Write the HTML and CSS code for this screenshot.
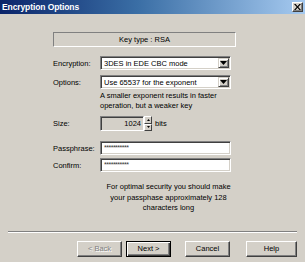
FILE: index.html
```html
<!DOCTYPE html>
<html>
<head>
<meta charset="utf-8">
<link rel="stylesheet" href="styles.css">
</head>
<body>
<div class="window">
  <div class="titlebar">
    <span class="title">Encryption Options</span>
    <span class="close"><svg width="7" height="6" viewBox="0 0 7 6"><path d="M0 0h1.6L3.5 2.2 5.4 0H7L4.3 3 7 6H5.4L3.5 3.8 1.6 6H0l2.7-3z" fill="#000"/></svg></span>
  </div>
  <div class="content">
    <div class="keytype">Key type : RSA</div>
    <div class="form">
      <label class="lbl r-enc">Encryption:</label>
      <div class="combo r-enc"><span class="combo-text">3DES in EDE CBC mode</span><span class="drop"><svg width="7" height="4" viewBox="0 0 7 4"><path d="M0 0h7L3.5 4z" fill="#000"/></svg></span></div>
      <label class="lbl r-opt">Options:</label>
      <div class="combo r-opt"><span class="combo-text">Use 65537 for the exponent</span><span class="drop"><svg width="7" height="4" viewBox="0 0 7 4"><path d="M0 0h7L3.5 4z" fill="#000"/></svg></span></div>
      <div class="desc">A smaller exponent results in faster<br>operation, but a weaker key</div>
      <label class="lbl r-size">Size:</label>
      <div class="sizewrap">
        <div class="spinfield">1024</div>
        <div class="spin">
          <span class="spinbtn"><svg width="3" height="2" viewBox="0 0 3 2"><path d="M0 2h3L1.5 0z" fill="#000"/></svg></span>
          <span class="spinbtn"><svg width="3" height="2" viewBox="0 0 3 2"><path d="M0 0h3L1.5 2z" fill="#000"/></svg></span>
        </div>
        <span class="bits">bits</span>
      </div>
      <label class="lbl r-pass">Passphrase:</label>
      <div class="field r-pass">***********</div>
      <label class="lbl r-conf">Confirm:</label>
      <div class="field r-conf">***********</div>
    </div>
    <div class="note">For optimal security you should make<br>your passphase approximately 128<br>characters long</div>
  </div>
  <div class="sep"></div>
  <div class="buttons">
    <button class="btn disabled">&lt; Back</button>
    <button class="btn default">Next &gt;</button>
    <button class="btn cancel">Cancel</button>
    <button class="btn help">Help</button>
  </div>
</div>
</body>
</html>
```
FILE: styles.css
```css
html, body {
  margin: 0;
  padding: 0;
  background: #d4d0c8;
}
body {
  width: 305px;
  height: 262px;
  overflow: hidden;
  font-family: "Liberation Sans", Arial, sans-serif;
  font-size: 8px;
  color: #000;
}
.window {
  display: flex;
  flex-direction: column;
  width: 305px;
  height: 262px;
}
.titlebar {
  height: 14px;
  display: flex;
  align-items: center;
  justify-content: space-between;
  background: linear-gradient(to right, #0a246a 0%, #3a6ea5 45%, #a6caf0 100%);
  padding: 0 2px 0 2px;
}
.title {
  color: #fff;
  font-weight: bold;
  font-size: 8.5px;
  letter-spacing: -0.1px;
}
.close {
  width: 11px;
  height: 10px;
  box-sizing: border-box;
  background: #d4d0c8;
  border: 1px solid;
  border-color: #fff #404040 #404040 #fff;
  box-shadow: inset -1px -1px #808080;
  display: flex;
  align-items: center;
  justify-content: center;
}
.content {
  padding-left: 53px;
}
.keytype {
  margin-top: 18px;
  width: 183px;
  height: 15px;
  box-sizing: border-box;
  border: 1px solid;
  border-color: #808080 #fff #fff #808080;
  display: flex;
  align-items: center;
  justify-content: center;
  font-size: 7.5px;
}
.form {
  display: grid;
  grid-template-columns: 47px 131px;
  align-items: center;
  margin-top: 9px;
}
.lbl {
  font-size: 7.5px;
}
.combo, .field, .spinfield {
  box-sizing: border-box;
  background: #fff;
  border: 1px solid;
  border-color: #808080 #fff #fff #808080;
  box-shadow: inset 1px 1px #404040, inset -1px -1px #d4d0c8;
}
.combo {
  height: 14px;
  display: flex;
  align-items: center;
  justify-content: space-between;
  padding: 0 1px 0 3px;
  font-size: 7.5px;
}
.r-opt { margin-top: 5px; }
.drop {
  width: 11px;
  height: 10px;
  box-sizing: border-box;
  background: #d4d0c8;
  border: 1px solid;
  border-color: #d4d0c8 #404040 #404040 #d4d0c8;
  box-shadow: inset 1px 1px #fff, inset -1px -1px #808080;
  display: flex;
  align-items: center;
  justify-content: center;
}
.desc {
  grid-column: 2;
  font-size: 7.5px;
  line-height: 10px;
  margin-top: 2px;
}
.sizewrap {
  grid-column: 2;
  display: flex;
  align-items: center;
  margin-top: 5px;
}
.r-size { margin-top: 5px; }
.spinfield {
  width: 44px;
  height: 15px;
  background: #d4d0c8;
  text-align: right;
  padding-right: 2px;
  line-height: 13px;
  font-size: 7.5px;
}
.spin {
  display: flex;
  flex-direction: column;
  width: 8px;
  height: 15px;
}
.spinbtn {
  flex: 1;
  box-sizing: border-box;
  border: 1px solid;
  border-color: #fff #404040 #404040 #fff;
  display: flex;
  align-items: center;
  justify-content: center;
}
.bits {
  margin-left: 3px;
  font-size: 7.5px;
}
.field {
  height: 14px;
  padding-left: 3px;
  font-size: 7px;
  line-height: 12px;
  color: #333;
  letter-spacing: -0.5px;
}
.r-pass { margin-top: 10px; }
.r-conf { margin-top: 3px; }
.note {
  width: 183px;
  margin-left: 24px;
  margin-top: 10px;
  text-align: center;
  font-size: 7.5px;
  line-height: 10.5px;
  color: #000;
}
.sep {
  margin: 17px 8px 0 8px;
  height: 0;
  border-top: 1px solid #808080;
  border-bottom: 1px solid #fff;
}
.buttons {
  display: flex;
  margin-top: 8px;
  padding-left: 77px;
}
.btn {
  height: 16px;
  width: 45px;
  box-sizing: border-box;
  margin: 0;
  padding: 0;
  background: #d4d0c8;
  border: 1px solid;
  border-color: #fff #404040 #404040 #fff;
  box-shadow: inset -1px -1px #808080;
  font-family: "Liberation Sans", Arial, sans-serif;
  font-size: 7.5px;
  color: #000;
}
.disabled {
  color: #808080;
  text-shadow: 1px 1px #fff;
}
.default {
  margin-left: 4px;
  border: 1px solid #000;
  box-shadow: inset 1px 1px #fff, inset -1px -1px #404040, inset -2px -2px #808080;
}
.cancel { margin-left: 14px; }
.help { margin-left: 16px; width: 51px; }
```
